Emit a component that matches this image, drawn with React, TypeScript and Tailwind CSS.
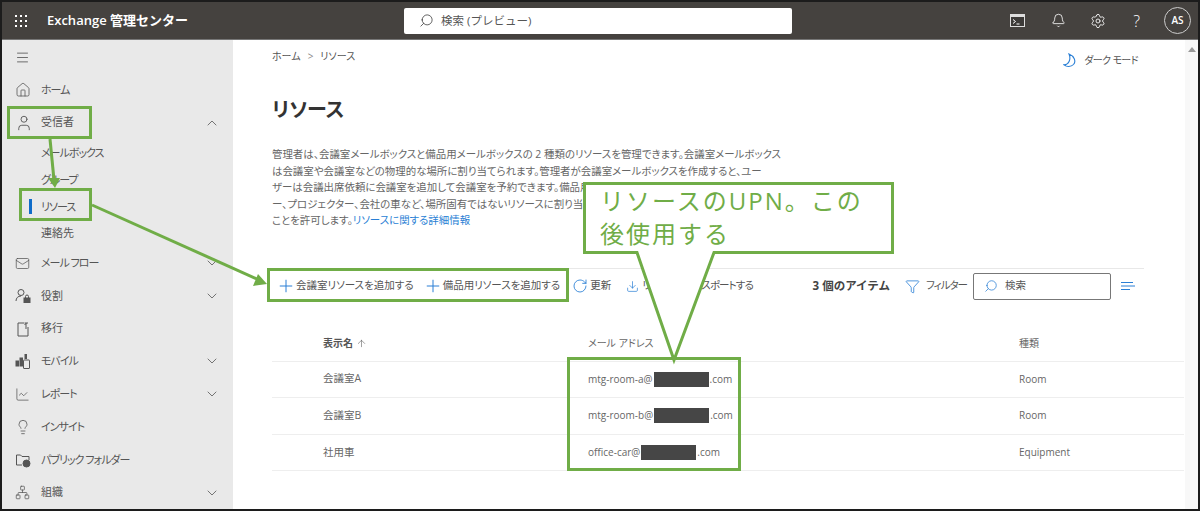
import { ReactNode } from "react"
import {
  ArrowUp,
  Bell,
  ChartLine,
  ChevronDown,
  ChevronUp,
  Download,
  Filter,
  Home,
  Lightbulb,
  Mail,
  Menu,
  Network,
  Plus,
  RotateCw,
  Search,
  Settings,
  User,
} from "lucide-react"

const font = "font-['Open_Sans','Noto_Sans_CJK_JP',sans-serif]"
// Noto's proportional kana, closer to the narrow kana in the screenshot
const palt = "[font-feature-settings:'palt']"

function Waffle() {
  const dots = [2, 7, 12]
  return (
    <svg width="14" height="14" viewBox="0 0 14 14" fill="#fff">
      {dots.map((y) => dots.map((x) => <rect key={`${x}-${y}`} x={x - 1} y={y - 1} width="2" height="2" />))}
    </svg>
  )
}

function RoleIcon() {
  return (
    <svg width="16" height="16" viewBox="0 0 16 16" fill="none" stroke="#555" strokeWidth="1">
      <circle cx="6" cy="4.5" r="3" />
      <path d="M1 13c0-3 2-5 5-5" />
      <rect x="9" y="10" width="6" height="4.5" fill="#555" />
      <path d="M10.5 10V8.5a1.5 1.5 0 0 1 3 0V10" />
    </svg>
  )
}

function MigrateIcon() {
  return (
    <svg width="16" height="16" viewBox="0 0 16 16" fill="none" stroke="#555" strokeWidth="1">
      <path d="M9 2H3v13h10V6" />
      <path d="M13 2H9.5M11 2v6M9.5 4 11 2.5" />
    </svg>
  )
}

function MobileIcon() {
  return (
    <svg width="16" height="16" viewBox="0 0 16 16" fill="none" stroke="#555" strokeWidth="1">
      <rect x="1" y="8" width="2.5" height="5" fill="#555" />
      <rect x="5" y="5" width="2.5" height="8" fill="#555" />
      <rect x="8.5" y="7" width="6" height="8.5" rx="0.5" />
      <rect x="9.5" y="1" width="2.5" height="5" fill="#555" stroke="none" />
    </svg>
  )
}

function FolderIcon() {
  return (
    <svg width="16" height="16" viewBox="0 0 16 16" fill="none" stroke="#555" strokeWidth="1">
      <path d="M7 13H1.5V3h4l1.5 1.5h7V8" />
      <circle cx="11.5" cy="11.5" r="3.5" fill="#555" />
    </svg>
  )
}

function SortLines() {
  return (
    <svg width="14" height="10" viewBox="0 0 14 10" fill="none" stroke="#2a7fd5" strokeWidth="1" className="ml-[10px] mr-[9px]">
      <path d="M0 1.5h12M0 5h14M0 8.5h9" />
    </svg>
  )
}

function Crescent() {
  return (
    <svg width="14" height="15" viewBox="0 0 14 15" fill="none" stroke="#2a7fd5" strokeWidth="1.1">
      <path d="M6 1C11 3 13.5 8 10.5 11.5 8 14.2 3.5 14 1 11.8 6 11.5 8.2 6 6 1Z" />
    </svg>
  )
}

function NavItem({ icon, label, chevron, kana }: { icon: ReactNode; label: string; chevron?: "up" | "down"; kana?: boolean }) {
  return (
    <div className="flex h-[33.25px] items-center px-[13px] text-[11px] text-[#555]">
      <div className="flex w-[26px] shrink-0 items-center">{icon}</div>
      <span className={kana ? "flex-1 tracking-[-1px]" : "flex-1"}>{label}</span>
      {chevron === "up" && <ChevronUp size={16} strokeWidth={1.2} className="text-[#555]" />}
      {chevron === "down" && <ChevronDown size={16} strokeWidth={1.2} className="text-[#555]" />}
    </div>
  )
}

function SubItem({ label, active, kana }: { label: string; active?: boolean; kana?: boolean }) {
  return (
    <div className="flex h-[26.7px] items-center text-[11px] text-[#555]">
      <div className="flex w-[30px] justify-end">
        {active && <div className="h-[15px] w-[3px] bg-[#0f6cc9]" />}
      </div>
      <span className={kana ? "pl-[9px] tracking-[-1px]" : "pl-[9px]"}>{label}</span>
    </div>
  )
}

const rows = [
  { name: "会議室A", prefix: "mtg-room-a@", type: "Room" },
  { name: "会議室B", prefix: "mtg-room-b@", type: "Room" },
  { name: "社用車", prefix: "office-car@", type: "Equipment" },
]

function Sidebar() {
  return (
    <aside className={`flex w-[231px] shrink-0 flex-col bg-[#e9e9e9] pt-[1px] ${palt}`}>
      <div className="flex h-[33px] items-center pl-[13px]">
        <Menu size={15} strokeWidth={1.2} className="text-[#444]" />
      </div>
      <NavItem icon={<Home size={16} strokeWidth={1.2} className="text-[#555]" />} label="ホーム" kana />
      <NavItem icon={<User size={18} strokeWidth={1.2} className="text-[#555]" />} label="受信者" chevron="up" />
      <div className="mt-[1px]">
        <SubItem label="メールボックス" kana />
        <SubItem label="グループ" kana />
        <SubItem label="リソース" active kana />
        <SubItem label="連絡先" />
      </div>
      <NavItem icon={<Mail size={15} strokeWidth={1.2} className="text-[#555]" />} label="メール フロー" chevron="down" kana />
      <NavItem icon={<RoleIcon />} label="役割" chevron="down" />
      <NavItem icon={<MigrateIcon />} label="移行" />
      <NavItem icon={<MobileIcon />} label="モバイル" chevron="down" kana />
      <NavItem icon={<ChartLine size={15} strokeWidth={1.2} className="text-[#555]" />} label="レポート" chevron="down" kana />
      <NavItem icon={<Lightbulb size={16} strokeWidth={1.2} className="text-[#555]" />} label="インサイト" kana />
      <NavItem icon={<FolderIcon />} label="パブリック フォルダー" kana />
      <NavItem icon={<Network size={15} strokeWidth={1.2} className="text-[#555]" />} label="組織" chevron="down" />
    </aside>
  )
}

function Toolbar() {
  return (
    <div className="mt-[39px] flex h-[36px] w-[872px] items-center border-t border-[#e8e8e8] pl-[4px] text-[10.5px] text-[#555]">
      <div className="flex items-center gap-[9px] whitespace-nowrap">
        <div className="flex items-center">
          <Plus size={20} strokeWidth={1.2} className="text-[#2a7fd5]" />
          <span>会議室リソースを追加する</span>
        </div>
        <div className="flex items-center">
          <Plus size={20} strokeWidth={1.2} className="text-[#2a7fd5]" />
          <span>備品用リソースを追加する</span>
        </div>
      </div>
      <div className="ml-[12px] flex items-center gap-[2px] whitespace-nowrap">
        <RotateCw size={16} strokeWidth={1.3} className="text-[#2a7fd5]" />
        <span>更新</span>
      </div>
      <div className="ml-[15px] flex items-center gap-[3px] whitespace-nowrap">
        <Download size={13} strokeWidth={1.3} className="text-[#2a7fd5]" />
        <span className="tracking-[-0.9px]">リソースをエクスポートする</span>
      </div>
      <div className="ml-auto flex items-center">
        <span className="whitespace-nowrap text-[11.5px] font-bold text-[#444] [font-feature-settings:normal]">3 個のアイテム</span>
        <div className="ml-[15px] flex items-center gap-[6px] whitespace-nowrap">
          <Filter size={15} strokeWidth={1.3} className="text-[#2a7fd5]" />
          <span className="tracking-[-1px]">フィルター</span>
        </div>
        <div className="ml-[6px] flex h-[27px] w-[138px] items-center gap-[7px] rounded-[2px] border border-[#777] pl-[10px]">
          <Search size={14} strokeWidth={1.3} className="-scale-x-100 text-[#2a7fd5]" />
          <span>検索</span>
        </div>
        <SortLines />
      </div>
    </div>
  )
}

function ResourceTable() {
  return (
    <div className="mt-[23px] w-[912px] text-[10px] text-[#666]">
      <div className="grid h-[35px] grid-cols-[316px_431px_1fr] items-center border-b border-[#eee]">
        <div className="flex items-center gap-[3px] pl-[51px] font-semibold text-[#555]">
          表示名
          <ArrowUp size={11} strokeWidth={1.2} />
        </div>
        <div>メール アドレス</div>
        <div>種類</div>
      </div>
      {rows.map((row) => (
        <div key={row.name} className="grid h-[36.6px] grid-cols-[316px_431px_1fr] items-center border-b border-[#eee]">
          <div className="pl-[51px] text-[10.5px]">{row.name}</div>
          <div className="flex items-center">
            <span>{row.prefix}</span>
            <span className="mx-[1px] h-[15px] w-[55px] bg-[#464646]" />
            <span>.com</span>
          </div>
          <div>{row.type}</div>
        </div>
      ))}
    </div>
  )
}

export default function App() {
  return (
    <div className={`relative h-[511px] w-[1200px] overflow-hidden border-2 border-[#1c1c1c] bg-white ${font}`}>
      <header className="flex h-[38px] items-center border-b border-[#777] bg-[#45423f] pl-[12px] text-white">
        <Waffle />
        <span className="ml-[19px] whitespace-nowrap text-[13px] font-semibold">Exchange 管理センター</span>
        <div className="ml-[216px] flex h-[26px] w-[388px] items-center gap-[7px] rounded-[2px] bg-white pl-[15px] text-[11.5px] text-[#555]">
          <Search size={15} strokeWidth={1.2} className="-scale-x-100 text-[#333]" />
          <span>検索 (プレビュー)</span>
        </div>
        <div className="ml-auto flex items-center pr-[7px]">
          <svg width="15" height="13" viewBox="0 0 15 13" fill="none" className="mr-[26px]">
            <rect x="0.5" y="0.5" width="14" height="12" fill="#3c3a38" stroke="#ddd" />
            <rect x="0.5" y="0.5" width="14" height="2.5" fill="#ddd" />
            <path d="M3 5.5 5.5 7.5 3 9.5M6.5 10h3" stroke="#fff" />
          </svg>
          <Bell size={15} strokeWidth={1.3} className="mr-[24px]" />
          <Settings size={16} strokeWidth={1.3} className="mr-[27px]" />
          <span className="mr-[24px] text-[16px] font-light">?</span>
          <div className="flex h-[27px] w-[27px] items-center justify-center rounded-full border border-[#ccc] text-[10px] font-semibold">
            AS
          </div>
        </div>
      </header>

      <div className="flex h-[469px]">
        <Sidebar />
        <main className={`relative flex min-w-0 flex-1 flex-col pl-[39px] text-[#555] ${palt}`}>
          <div className="flex h-[24px] w-[866px] items-end justify-between text-[10px]">
            <div className="flex items-center gap-[7px]">
              <span>ホーム</span>
              <span className="text-[#888]">&gt;</span>
              <span>リソース</span>
            </div>
            <div className="flex translate-y-[4px] items-center gap-[7px]">
              <Crescent />
              <span className="tracking-[-0.6px]">ダーク モード</span>
            </div>
          </div>
          <h1 className="mt-[31px] text-[20px] font-bold leading-[30px] text-[#333]">リソース</h1>
          <p className="mt-[21px] w-[560px] text-[10.45px] leading-[16.5px] text-[#666]">
            <span className="block whitespace-nowrap">管理者は、会議室メールボックスと備品用メールボックスの 2 種類のリソースを管理できます。会議室メールボックス</span>
            <span className="block whitespace-nowrap">は会議室や会議室などの物理的な場所に割り当てられます。管理者が会議室メールボックスを作成すると、ユー</span>
            <span className="block whitespace-nowrap">ザーは会議出席依頼に会議室を追加して会議室を予約できます。備品用メールボックスはリソースに割り当て</span>
            <span className="block whitespace-nowrap">ー、プロジェクター、会社の車など、場所固有ではないリソースに割り当てられ</span>
            <span className="block whitespace-nowrap">
              ことを許可します。<span className="text-[#2a7fd5]">リソースに関する詳細情報</span>
            </span>
          </p>
          <Toolbar />
          <ResourceTable />
          <div className="absolute right-0 top-0 h-full w-[13px] bg-[#f8f8f8]">
            <div className="mx-auto mt-[7px] h-0 w-0 border-x-[4px] border-b-[5px] border-x-transparent border-b-[#999]" />
          </div>
        </main>
      </div>

      {/* annotations, page coords minus the 2px border */}
      <div className="absolute left-[5px] top-[104px] h-[33px] w-[85px] border-[3px] border-[#70ad47]" />
      <div className="absolute left-[17px] top-[186px] h-[33px] w-[73px] border-[3px] border-[#70ad47]" />
      <div className="absolute left-[265px] top-[266px] h-[34px] w-[302px] border-[3px] border-[#70ad47]" />
      <div className="absolute left-[565px] top-[355px] h-[114px] w-[174px] border-[3px] border-[#70ad47]" />
      <svg className="absolute left-0 top-0" width="1196" height="507" viewBox="0 0 1196 507" fill="none">
        <path d="M48 137 52 178" stroke="#70ad47" strokeWidth="3" />
        <path d="M46 176 58 176 53 186Z" fill="#70ad47" />
        <path d="M90 203 255 277" stroke="#70ad47" strokeWidth="3" />
        <path d="M256 272 251 284 265 282Z" fill="#70ad47" />
        <path
          d="M582.5 181.5H890.5V250.5H712L672 358 635 250.5H582.5Z"
          fill="#fff"
          stroke="#70ad47"
          strokeWidth="3"
        />
      </svg>
      <div className="absolute left-[598px] top-[182px] whitespace-nowrap text-[24px] leading-[33px] tracking-[2px] text-[#70ad47]">
        リソースのUPN。この
        <br />
        後使用する
      </div>
    </div>
  )
}
